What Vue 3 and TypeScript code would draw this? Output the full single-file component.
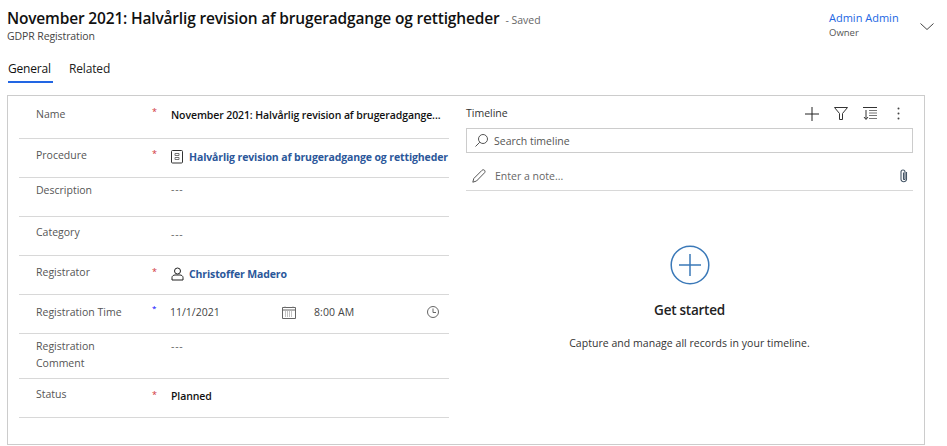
<script setup lang="ts">
const recordTitle: string = 'November 2021: Halvårlig revision af brugeradgange og rettigheder'
const procedure: string = 'Halvårlig revision af brugeradgange og rettigheder'
</script>

<template>
  <div class="page">
    <header class="head">
      <div class="titles">
        <div class="title-line">
          <h1>{{ recordTitle }}</h1>
          <span class="saved">- Saved</span>
        </div>
        <div class="entity">GDPR Registration</div>
      </div>
      <div class="owner">
        <div class="owner-text">
          <a class="owner-name">Admin Admin</a>
          <span class="owner-role">Owner</span>
        </div>
        <svg class="chev" width="14" height="8" viewBox="0 0 14 8"><path d="M.5.500 7 6.500 13.500.5" fill="none" stroke="#444" stroke-width="1"/></svg>
      </div>
    </header>
    <nav class="tabs">
      <span class="tab active">General</span>
      <span class="tab">Related</span>
    </nav>
    <section class="card">
      <div class="form">
        <div class="row r42">
          <span class="label lp10">Name</span><span class="star">*</span>
          <span class="value strong vp12">November 2021: Halvårlig revision af brugeradgange...</span>
        </div>
        <div class="row r38">
          <span class="label lp8">Procedure</span><span class="star sp8">*</span>
          <span class="value link vp11">
            <svg width="13" height="14" viewBox="0 0 13 14"><rect x=".5" y=".5" width="11" height="12.500" rx="1" fill="none" stroke="#333"/><path d="M4 3.500h4v2H4zM4 7.500h4v2H4z" fill="none" stroke="#777"/></svg>
            <b>{{ procedure }}</b>
          </span>
        </div>
        <div class="row r38">
          <span class="label lp4">Description</span><span class="star"></span>
          <span class="value dash vp4">---</span>
        </div>
        <div class="row r38">
          <span class="label lp7">Category</span><span class="star"></span>
          <span class="value dash vp10">---</span>
        </div>
        <div class="row r38">
          <span class="label lp8">Registrator</span><span class="star">*</span>
          <span class="value link vp11">
            <svg width="13" height="14" viewBox="0 0 13 14"><circle cx="6.500" cy="4" r="3" fill="none" stroke="#222"/><path d="M1 13v-2.500C1 9 2.500 8 4 8h5c1.500 0 3 1 3 2.500V13z" fill="none" stroke="#222"/></svg>
            <b>Christoffer Madero</b>
          </span>
        </div>
        <div class="row r38">
          <span class="label lp9">Registration Time</span><span class="star blue">*</span>
          <span class="value time vp10">
            <span class="date">11/1/2021</span>
            <svg class="cal" width="14" height="13" viewBox="0 0 14 13"><path d="M.5 1.500h13v11H.5zM.5 4h13" fill="none" stroke="#666"/><path d="M3 .5v2M11 .5v2M3 6h8M3 8h8M3 10h8" stroke="#888" stroke-dasharray="1 1"/></svg>
            <span class="clock-text">8:00 AM</span>
            <svg class="clock" width="12" height="12" viewBox="0 0 12 12"><circle cx="6" cy="6" r="5.500" fill="none" stroke="#666"/><path d="M6 2.500V6.500H9" fill="none" stroke="#666"/></svg>
          </span>
        </div>
        <div class="row r44">
          <span class="label lp4">Registration<br>Comment</span><span class="star"></span>
          <span class="value dash vp5">---</span>
        </div>
        <div class="row r38">
          <span class="label lp7">Status</span><span class="star">*</span>
          <span class="value strong vp10">Planned</span>
        </div>
      </div>

      <div class="timeline">
        <div class="tl-head">
          <span class="tl-title">Timeline</span>
          <div class="tl-tools">
            <svg width="14" height="14" viewBox="0 0 14 14"><path d="M7 0v14M0 7h14" stroke="#222" stroke-width="1"/></svg>
            <svg width="14" height="13" viewBox="0 0 14 13"><path d="M.5.500h13L8.500 6.500v6h-3v-6z" fill="none" stroke="#333"/></svg>
            <svg width="14" height="13" viewBox="0 0 14 13"><path d="M0 .5h14M3 3v9M1 10l2 2.500L5 10" fill="none" stroke="#333"/><path d="M6 3.500h8M6 6h8M6 8.500h8M6 11.500h8" stroke="#777"/></svg>
            <svg class="dots" width="3" height="13" viewBox="0 0 3 13"><circle cx="1.500" cy="1.500" r="1" fill="#444"/><circle cx="1.500" cy="6.500" r="1" fill="#444"/><circle cx="1.500" cy="11.500" r="1" fill="#444"/></svg>
          </div>
        </div>
        <div class="search">
          <svg width="13" height="13" viewBox="0 0 13 13"><circle cx="8" cy="5" r="4.500" fill="none" stroke="#555"/><path d="M4.800 8.200.5 12.500" stroke="#555"/></svg>
          <span>Search timeline</span>
        </div>
        <div class="note">
          <svg width="14" height="14" viewBox="0 0 14 14"><path d="M.8 13.200 1.800 9.500 10 1.300c.7-.7 1.800-.7 2.500 0s.7 1.800 0 2.500L4.500 12z" fill="none" stroke="#555"/></svg>
          <span class="note-text">Enter a note...</span>
          <svg class="clip" width="8" height="14" viewBox="0 0 8 14"><path d="M6.500 3v7.500a2.800 2.800 0 0 1-5.500 0V3a2 2 0 0 1 4 0v7a.8.8 0 0 1-1.500 0V3.500" fill="none" stroke="#456" stroke-width="1.100"/></svg>
        </div>
        <div class="empty">
          <svg width="40" height="40" viewBox="0 0 40 40"><circle cx="20" cy="20" r="18.800" fill="none" stroke="#3b79b8" stroke-width="1.500"/><path d="M20 9v22M9 20h22" stroke="#3b79b8" stroke-width="1.500"/></svg>
          <div class="empty-title">Get started</div>
          <div class="empty-text">Capture and manage all records in your timeline.</div>
        </div>
      </div>
    </section>
  </div>
</template>

<style>
html, body { margin: 0; background: #fff; }
</style>

<style scoped>
.page {
  width: 947px;
  height: 446px;
  box-sizing: border-box;
  font-family: "Open Sans", "Noto Sans", sans-serif;
  color: #333;
  overflow: hidden;
}
.head {
  display: flex;
  justify-content: space-between;
  height: 46px;
  padding: 8px 13px 0 7px;
  box-sizing: border-box;
}
.title-line { display: flex; align-items: baseline; gap: 6px; height: 21px; }
h1 {
  margin: 0;
  font-size: 15.500px;
  line-height: 21px;
  font-weight: 600;
  color: #111;
  letter-spacing: -.175px;
  white-space: nowrap;
}
.saved { font-size: 10.500px; color: #666; }
.entity { font-size: 10.500px; color: #444; line-height: 14px; letter-spacing: -.1px; }
.owner { display: flex; gap: 20px; padding-top: 2px; }
.owner-text { display: flex; flex-direction: column; width: 71px; }
.owner-name { font-size: 11px; line-height: 15px; color: #2266e3; white-space: nowrap; }
.owner-role { font-size: 9.500px; line-height: 16px; color: #555; }
.chev { margin-top: 13px; }
.tabs {
  display: flex;
  gap: 16px;
  padding-left: 8px;
  height: 37px;
  box-sizing: border-box;
  margin-top: 12px;
}
.tab { font-size: 12px; line-height: 22px; height: 25px; color: #222; letter-spacing: -.15px; }
.tab.active { font-weight: 500; border-bottom: 2px solid #2266e3; color: #111; width: 45px; height: 22px; padding-bottom: 1px; letter-spacing: -.2px; }
.card {
  margin: 0 22px 0 7px;
  height: 350px;
  box-sizing: border-box;
  border: 1px solid #ccc;
  display: flex;
}
.form { width: 430px; margin-left: 11px; flex: none; }
.row {
  display: flex;
  border-bottom: 1px solid #d8d8d8;
  font-size: 10.500px;
}
.r42 { height: 42px; }
.r38 { height: 38px; }
.r44 { height: 44px; }
.label {
  width: 116px;
  margin-left: 17px;
  color: #555;
  line-height: 17px;
  flex: none;
}
.lp4 { padding-top: 4px; }
.lp7 { padding-top: 7px; }
.lp8 { padding-top: 8px; }
.lp9 { padding-top: 9px; }
.lp10 { padding-top: 10px; }
.star { width: 19px; flex: none; color: #d13438; line-height: 14px; padding-top: 9px; font-size: 9px; }
.star.sp8 { padding-top: 8px; }
.star.blue { color: #00f; padding-top: 6px; font-size: 8px; }
.value { display: flex; align-items: flex-start; gap: 5px; line-height: 15px; white-space: nowrap; }
.vp4 { padding-top: 4px; }
.vp5 { padding-top: 5px; }
.vp10 { padding-top: 10px; }
.vp11 { padding-top: 11px; }
.vp12 { padding-top: 12px; }
.strong { font-weight: 600; color: #111; letter-spacing: -.1px; }
.link { color: #2b579a; }
.link b { font-weight: 700; letter-spacing: -.12px; font-size: 10.500px; }
.dash { color: #666; letter-spacing: .8px; }
.time { width: 270px; color: #444; gap: 0; margin-left: -1px; }
.time .date { width: 112px; }
.cal { margin-top: 1px; }
.clock-text { margin-left: 18px; width: 113px; letter-spacing: .1px; }
.clock { margin-top: 1px; }
.timeline { width: 447px; margin-left: 17px; flex: none; display: flex; flex-direction: column; }
.tl-head { display: flex; justify-content: space-between; align-items: center; height: 32px; font-size: 10.500px; color: #333; }
.tl-title { font-weight: 500; padding-top: 2px; }
.tl-tools { display: flex; align-items: center; gap: 15px; padding-right: 13px; padding-top: 3px; }
.dots { margin-left: 5px; }
.search {
  height: 25px;
  box-sizing: border-box;
  border: 1px solid #ccc;
  display: flex;
  align-items: center;
  gap: 6px;
  padding-left: 8px;
  font-size: 10.500px;
  color: #555;
}
.note {
  height: 38px;
  border-bottom: 1px solid #d8d8d8;
  display: flex;
  align-items: center;
  box-sizing: border-box;
  padding: 8px 5px 0 6px;
  font-size: 10.500px;
  color: #666;
  gap: 9px;
}
.note-text { flex: 1; }
.empty { display: flex; flex-direction: column; align-items: center; padding-top: 54px; }
.empty-title { font-size: 13.500px; font-weight: 600; color: #222; margin-top: 15px; line-height: 20px; letter-spacing: -.25px; }
.empty-text { font-size: 10.500px; color: #333; margin-top: 16px; line-height: 14px; letter-spacing: .04px; }
</style>
